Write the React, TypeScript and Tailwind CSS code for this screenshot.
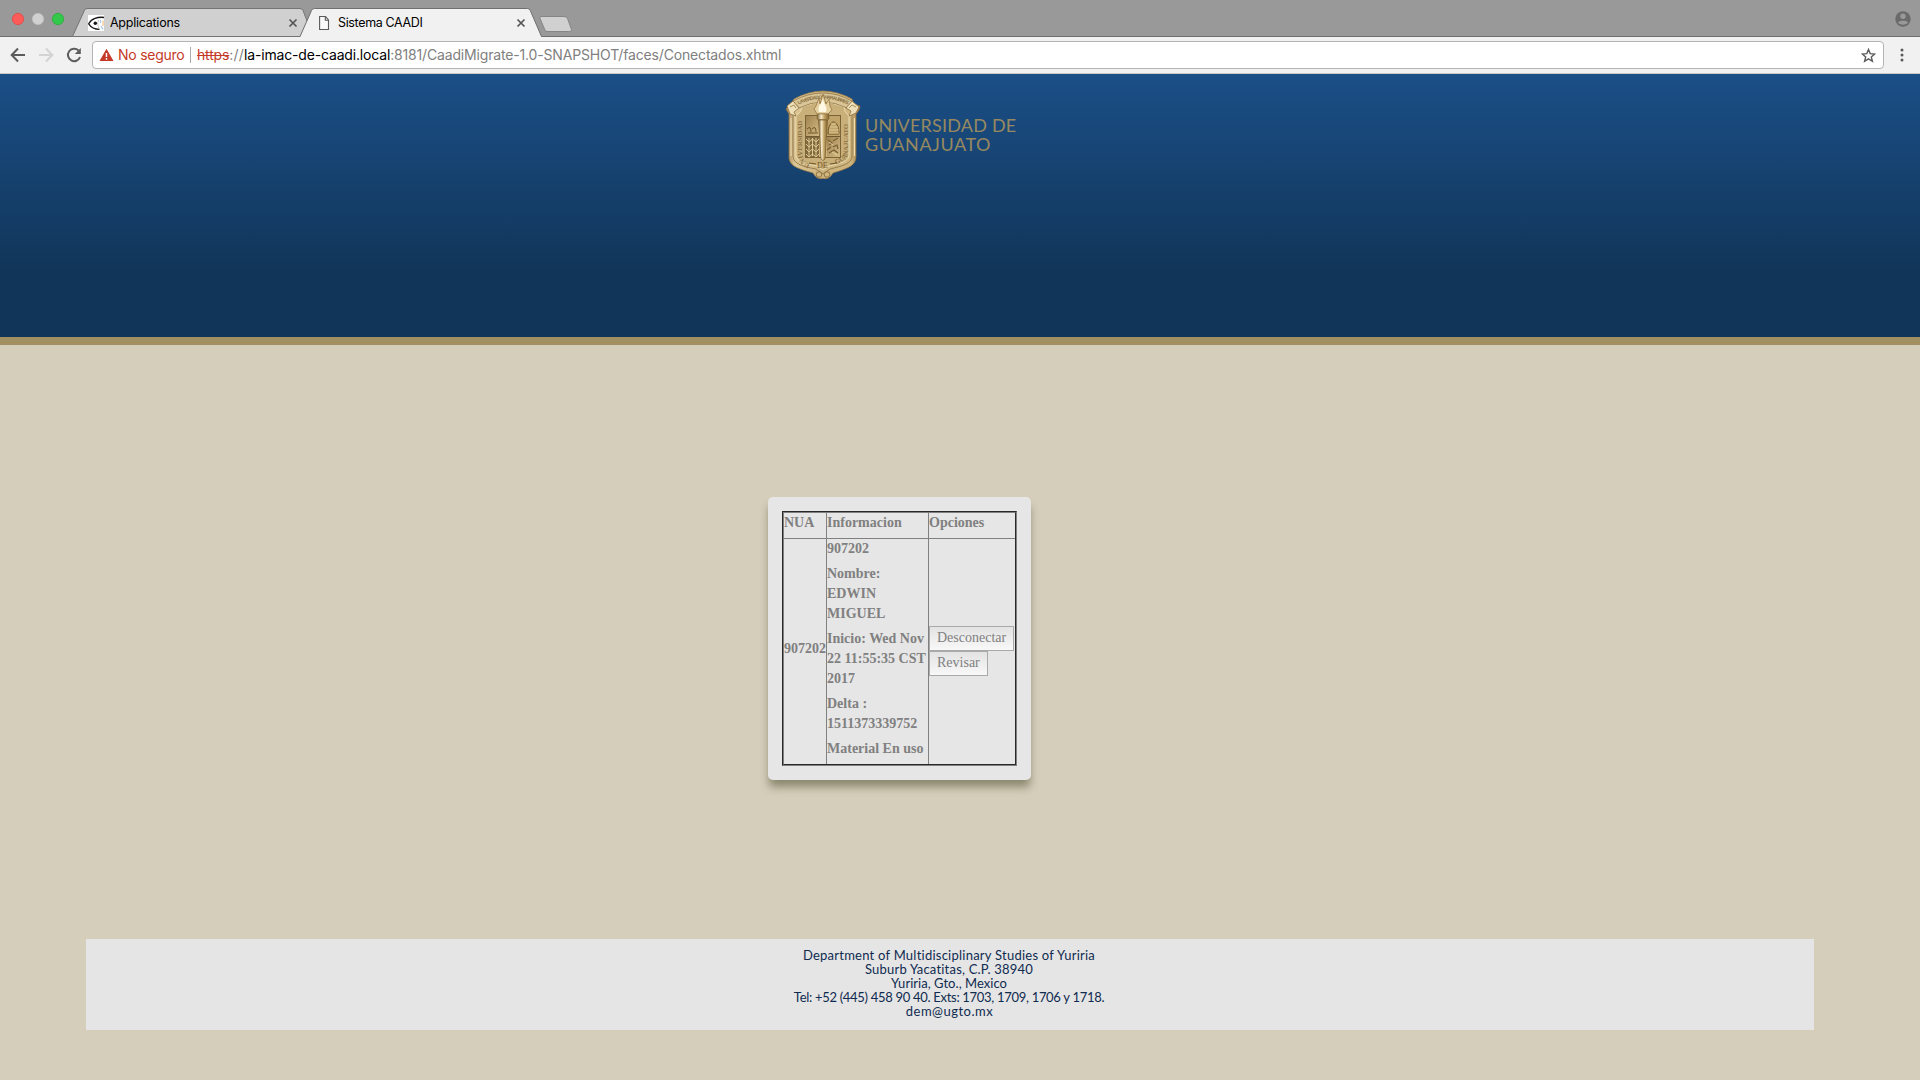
import React from "react";

function BrowserTabs() {
  return (
    <div className="relative h-[37px] bg-[#999999] flex">
      <svg className="absolute inset-0" width="1920" height="37" viewBox="0 0 1920 37">
        <rect y="36" width="1920" height="1" fill="#6f6f6f" />
        <path d="M72.500 36.500L84.500 10.200Q85.200 8.500 87 8.500H300Q302 8.500 303 10.500L313 36.500Z" fill="#d0d0d0" stroke="#747474" />
        <path d="M300 37L311.500 10.500Q312.300 8.500 314.500 8.500H527.500Q529.500 8.500 530.300 10.500L541.500 37Z" fill="#f1f1f1" />
        <path d="M300 36.500L311.500 10.500Q312.300 8.500 314.500 8.500H527.500Q529.500 8.500 530.300 10.500L541.500 36.500" fill="none" stroke="#6f6f6f" />
        <path d="M541 16.500H564Q566.500 16.500 567.500 18.500L571.500 29.500Q572 31.500 569.500 31.500H547Q545.500 31.500 544.700 29.500L540 18.500Q539.500 16.500 541 16.500Z" fill="#d0d0d0" stroke="#858585" />
        <circle cx="18" cy="19" r="5.700" fill="#fc5b57" stroke="#e2443f" strokeWidth=".7" />
        <circle cx="38" cy="19" r="5.700" fill="#d0d0d0" stroke="#bcbcbc" strokeWidth=".7" />
        <circle cx="58" cy="19" r="5.700" fill="#34c84a" stroke="#24a937" strokeWidth=".7" />
        <rect x="88" y="15" width="16" height="16" fill="#fff" />
        <path d="M104 17.500C98 16.500 91 19 88.700 23.800C91 27.500 95 29.300 99.500 29.300" fill="none" stroke="#171717" strokeWidth="1.300" />
        <path d="M98.500 20C97.300 23 97.600 26 99.300 28.500" fill="none" stroke="#999" strokeWidth=".6" />
        <circle cx="95.300" cy="23.200" r="1.700" fill="#171717" />
        <path d="M100.500 20V23M101 26L103 29.500" stroke="#9fc8f2" strokeWidth="1.200" />
        <path d="M103 20.500V26" stroke="#efb36a" strokeWidth="1" />
        <path d="M289.500 19.500L296.500 26.500M296.500 19.500L289.500 26.500M517.500 19.500L524.500 26.500M524.500 19.500L517.500 26.500" stroke="#555" strokeWidth="1.700" />
        <path d="M319.600 16.500H325.500L328.500 20V29.500H319.600ZM325.300 16.700V20.300H328.500" fill="#fafafa" stroke="#5a5a5a" strokeWidth="1.100" />
        <circle cx="1903" cy="19" r="7.700" fill="#6a6a6a" />
        <circle cx="1903" cy="16.200" r="2.700" fill="#999" />
        <path d="M1898 22.600C1899 20 1907 20 1908 22.600C1906 25.400 1900 25.400 1898 22.600Z" fill="#999" />
      </svg>
      <span className="relative ml-[110px] mt-[13px] w-[228px] text-[12.500px] leading-5 tracking-[-0.25px] text-black">Applications</span>
      <span className="relative mt-[13px] text-[12.500px] leading-5 tracking-[-0.35px] text-black">Sistema CAADI</span>
    </div>
  );
}

function AddressBar() {
  return (
    <div className="flex h-[37px] items-start border-b border-[#c8c8c8] bg-[#f1f1f1]">
      <svg className="shrink-0" width="92" height="36" viewBox="0 37 92 36" fill="none">
        <path d="M25 55H12M18 48.500L11.700 55L18 61.500" stroke="#5c5c5c" strokeWidth="2" />
        <path d="M39 55H52M46 48.500L52.300 55L46 61.500" stroke="#d3d3d3" strokeWidth="2" />
        <path d="M78.500 50.500A6.200 6.200 0 1 0 80 57" stroke="#5c5c5c" strokeWidth="2" />
        <path d="M80.800 48V54H74.800Z" fill="#5c5c5c" />
      </svg>
      <div className="mt-1 flex h-7 w-[1792px] items-center rounded border border-[#b4b4b4] bg-white text-[14px]">
        <svg className="ml-1.5 shrink-0" width="15" height="14" viewBox="0 0 15 14">
          <path d="M7.500 .7L14.500 13H.5Z" fill="#c53929" />
          <path d="M7.500 5V9M7.500 10V11.700" stroke="#fff" strokeWidth="1.400" />
        </svg>
        <span className="ml-[4px] w-[72px] pb-[2px] whitespace-nowrap tracking-[-0.25px] text-[#c53929]">No seguro</span>
        <span className="h-4 w-px bg-[#aaa]" />
        <span className="ml-[6px] pb-[2px] whitespace-nowrap tracking-[-0.165px] text-[#808080]">
          <span className="text-[#c53929] line-through">https</span><span className="tracking-[0.2px]">://</span><span className="text-black">la-imac-de-caadi.local</span>:8181/CaadiMigrate-1.0-SNAPSHOT/faces/Conectados.xhtml
        </span>
        <svg className="mr-[7px] ml-auto" width="15" height="15" viewBox="0 0 15 15">
          <path d="M7.500 1.500L9.200 5.600L13.700 6L10.300 8.900L11.400 13.300L7.500 10.900L3.600 13.300L4.700 8.900L1.300 6L5.800 5.600Z" fill="none" stroke="#5a5a5a" strokeWidth="1.400" />
        </svg>
      </div>
      <svg className="ml-[13px]" width="10" height="36" viewBox="0 0 10 36" fill="#5a5a5a">
        <circle cx="5" cy="13" r="1.500" /><circle cx="5" cy="18" r="1.500" /><circle cx="5" cy="23" r="1.500" />
      </svg>
    </div>
  );
}

function Crest() {
  return (
    <svg className="shrink-0" width="76" height="90" viewBox="0 0 76 90">
      <defs>
        <linearGradient id="gold" x1="0" x2="1" y1="0" y2="0">
          <stop offset="0" stopColor="#a08050" /><stop offset=".12" stopColor="#dcc797" />
          <stop offset=".5" stopColor="#ccb27b" /><stop offset=".88" stopColor="#d0b67e" /><stop offset="1" stopColor="#957540" />
        </linearGradient>
        <linearGradient id="panel" x1="0" x2="1" y1="0" y2="1">
          <stop offset="0" stopColor="#a18450" /><stop offset="1" stopColor="#d3ba84" />
        </linearGradient>
        <linearGradient id="pole" x1="0" x2="1" y1="0" y2="0">
          <stop offset="0" stopColor="#7d602f" /><stop offset=".35" stopColor="#f6ebcc" /><stop offset=".6" stopColor="#c5a667" /><stop offset="1" stopColor="#7d602f" />
        </linearGradient>
      </defs>
      <path d="M9 9Q38 -7 67 9L69 14L75 16Q75 20 71 24V67C71 76 61 79 48 83Q44 90 38 88.500Q32 90 28 83C15 79 4 77 4 67V24L1 19L5 15Z" fill="url(#gold)" stroke="#98763f" strokeWidth=".7" />
      <path d="M8 25V66C8 74 19 77 31 79L38 84L45 79C57 76 67 74 67 66V25" fill="none" stroke="#8f764a" strokeWidth=".9" />
      <path d="M11 26V65C11 71 21 74 32 76L38 80L44 76C55 74 64 71 64 65V26Q59 22 59 17Q38 8 17 17Q17 22 11 26Z" fill="#c9af79" stroke="#eadbb0" strokeWidth="1" />
      <path d="M6 28V66M69.500 28V66" stroke="#efe0b6" strokeWidth="1" />
      <path d="M8 11Q38 -5 67 11L62 18Q38 6 14 18Z" fill="#d9c596" stroke="#876c3c" strokeWidth=".7" />
      <path id="motto" d="M13.500 14.500Q38 3 62.500 14.500" fill="none" />
      <text fontSize="5" fontFamily="Liberation Sans" fontWeight="bold" fill="#8b7144"><textPath href="#motto" textLength="51">LA VERDAD OS HARA LIBRES</textPath></text>
      <path d="M2 16L8 11L14 18L9 22L11 26L5 24ZM74 17L67 11L61 18L66 21L64 26L71 23Z" fill="#eddfb8" stroke="#8d7040" strokeWidth=".8" />
      <path d="M5 17L9 15L11 18M71 17L67 15L64 18" fill="none" stroke="#957746" strokeWidth=".8" />
      <rect x="20.500" y="25.500" width="35" height="42" fill="#cdb37b" stroke="#7c6437" />
      <path d="M21 26H34V46H21Z" fill="url(#panel)" />
      <path d="M42 26H55V46H42Z" fill="#c0a46a" />
      <path d="M21 47H34V67H21Z" fill="#80693d" />
      <path d="M42 47H55V67H42Z" fill="url(#panel)" />
      <path d="M21 46.500H55" stroke="#715a2f" />
      <path d="M21 49L24 52L27.500 49L31 52L34 49M21 54L24 57L27.500 54L31 57L34 54M21 59L24 62L27.500 59L31 62L34 59M21 64L24 67L27.500 64L31 67L34 64M24 48V66M27.500 48V66M31 48V66" fill="none" stroke="#dec893" strokeWidth="1" />
      <path d="M22 39Q26 35 26 42M27 39Q31 35 31 42M23 43H33M43 44C43 36 46 32 48.500 32S54 36 54 44Z" fill="none" stroke="#6d5428" strokeWidth="1" />
      <path d="M46 34H51M45 37H53M44 40H54M44 43H54" stroke="#e4cf9b" strokeWidth=".9" />
      <path d="M43 50L47 53L44 55M48 51L53 48M44 63L49 60L53 63M48 57L52 55L53 59M42 60L46 57" fill="none" stroke="#765e33" strokeWidth="1.200" />
      <path d="M44 52L48 55M47 62L52 65" stroke="#edd9a7" strokeWidth=".8" />
      <path id="bandl" d="M30 76C20 73 17.500 70 17.500 62V25" fill="none" />
      <path id="bandr" d="M46 76C56 73 63 70 63 62V25" fill="none" />
      <g fontSize="7" fontFamily="Liberation Serif" fontWeight="bold" fill="#8d7345">
        <text><textPath href="#bandl" startOffset="5" textLength="47">UNIVERSIDAD</textPath></text>
        <text><textPath href="#bandr" startOffset="5" textLength="47">GUANAJUATO</textPath></text>
      </g>
      <path d="M31 16L34 8L35 14L38 4L41 14L44 9L45 16L47 20L43 24H32L29 19Z" fill="#e4d09f" stroke="#957541" strokeWidth=".8" />
      <path d="M34 22C32 16 36 15 38 9C39 15 43 17 41 22Z" fill="#fff9e3" />
      <rect x="32" y="24" width="12" height="5.500" rx="1" fill="url(#pole)" stroke="#866936" strokeWidth=".6" />
      <path d="M33.500 30H42.500L40 69Q38 72 36 69Z" fill="url(#pole)" stroke="#755a2c" strokeWidth=".7" />
      <path d="M24 73L31 74M45 74L52 73" stroke="#715729" strokeWidth="1.200" />
      <text x="32" y="77.500" fontSize="8" fontFamily="Liberation Serif" fill="#745a2d">DE</text>
      <circle cx="34" cy="84.500" r="2.800" fill="#d0b67e" stroke="#8f7243" /><circle cx="42" cy="84.500" r="2.800" fill="#d0b67e" stroke="#8f7243" />
    </svg>
  );
}

function SessionTable() {
  return (
    <div className="h-[283px] w-[263px] rounded-[5px] bg-[#e6e6e6] p-[14px] shadow-[0_8px_9px_-1px_rgba(60,60,30,0.48)]">
      <div className="h-[255px] w-[235px] border border-t-[#292929] border-r-[#808080] border-b-[#808080] border-l-[#292929]">
        <div className="grid h-[253px] w-[233px] grid-cols-[43px_102px_86px] grid-rows-[26px_225px] border border-t-[#808080] border-r-[#292929] border-b-[#292929] border-l-[#808080] font-['Liberation_Serif',serif] text-[14px] leading-5 font-bold whitespace-nowrap text-[#808080]">
          <div className="border-r border-b border-[#808080]">NUA</div>
          <div className="border-r border-b border-[#808080]">Informacion</div>
          <div className="border-b border-[#808080]">Opciones</div>
          <div className="flex items-center border-r border-[#808080] pb-[5px]">907202</div>
          <div className="flex flex-col gap-[5px] border-r border-[#808080]">
            <p>907202</p>
            <p>Nombre:<br />EDWIN<br />MIGUEL</p>
            <p>Inicio: Wed Nov<br />22 11:55:35 CST<br />2017</p>
            <p>Delta :<br />1511373339752</p>
            <p>Material En uso</p>
          </div>
          <div className="flex flex-col items-start justify-center pb-px font-normal">
            <button className="h-[25px] w-[85px] border border-[#a9a9a9] bg-gradient-to-b from-[#e3e3e3] to-[#f8f8f8] pb-[2px] pl-[7px] text-left leading-5">Desconectar</button>
            <button className="h-[25px] w-[59px] border border-[#a9a9a9] bg-gradient-to-b from-[#e3e3e3] to-[#f8f8f8] pb-[2px] pl-[7px] text-left leading-5">Revisar</button>
          </div>
        </div>
      </div>
    </div>
  );
}

export default function App() {
  return (
    <div className="flex h-[1080px] w-[1920px] flex-col overflow-hidden bg-[#d5cebb] font-['Inter',sans-serif]">
      <BrowserTabs />
      <AddressBar />
      <header className="flex h-[271px] shrink-0 border-b-8 border-[#a09062] bg-gradient-to-b from-[#1b4f87] to-[#113559] to-[76%] pt-4 pl-[785px]">
        <Crest />
        <div className="mt-[26px] ml-[4px] font-['Lato',sans-serif] text-[18px] leading-[19px] whitespace-nowrap text-[#97895f]">
          <div className="tracking-[0.2px]">UNIVERSIDAD DE</div>
          <div className="tracking-[0.6px]">GUANAJUATO</div>
        </div>
      </header>
      <main className="h-[594px] shrink-0 pt-[152px] pl-[768px]">
        <SessionTable />
      </main>
      <footer className="ml-[86px] h-[91px] w-[1728px] shrink-0 bg-[#e5e5e5] pt-[9px] pr-[2px] text-center font-['Lato',sans-serif] text-[13px] leading-[14px] text-[#0f2b50]">
        <p className="tracking-[0.24px]">Department of Multidisciplinary Studies of Yuriria</p>
        <p className="tracking-[0.2px]">Suburb Yacatitas, C.P. 38940</p>
        <p className="tracking-[0.04px]">Yuriria, Gto., Mexico</p>
        <p className="tracking-[-0.3px]">Tel: +52 (445) 458 90 40. Exts: 1703, 1709, 1706 y 1718.</p>
        <p className="pl-[1px] tracking-[0.5px]">dem@ugto.mx</p>
      </footer>
    </div>
  );
}
